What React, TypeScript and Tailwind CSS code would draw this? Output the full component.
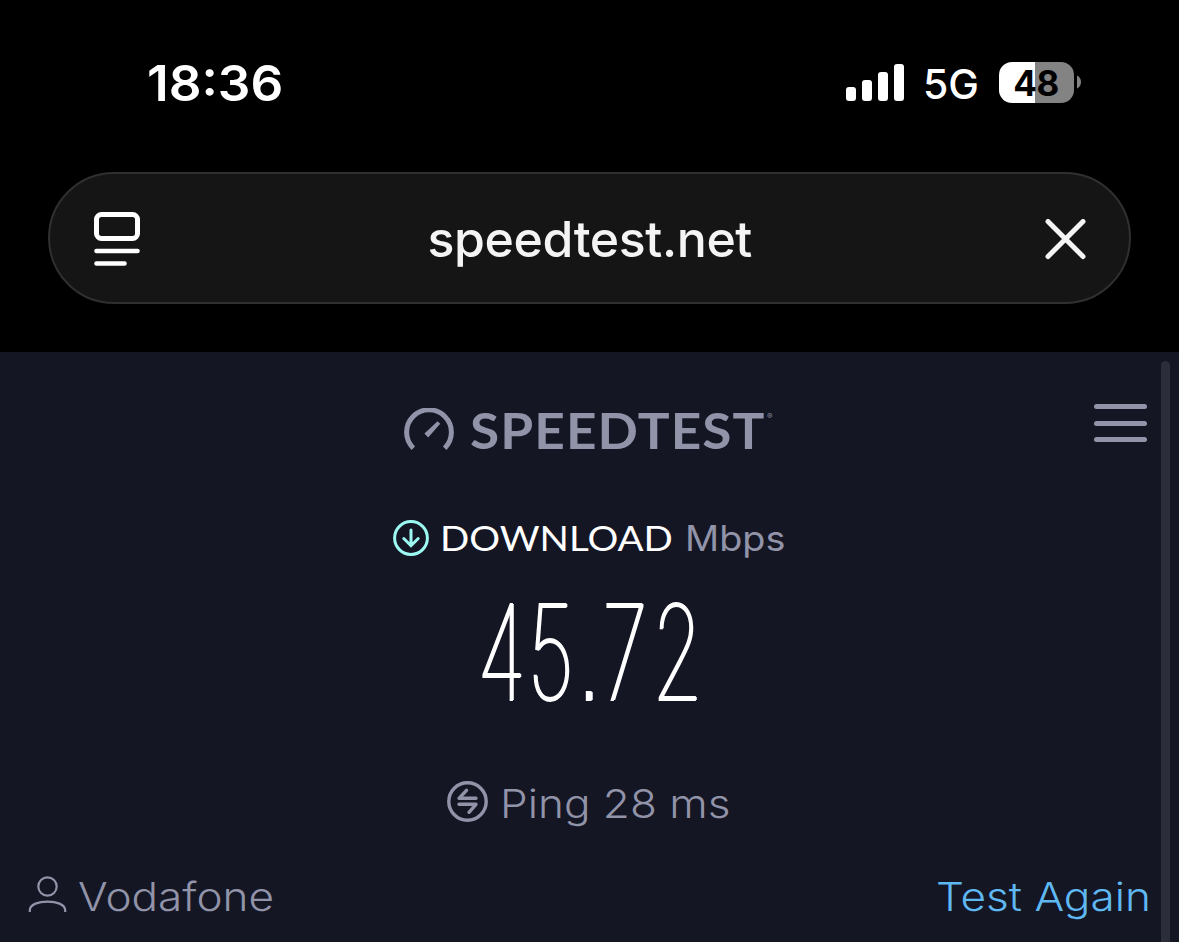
import type { ReactNode } from 'react'

interface LabelProps {
  className?: string
  children: ReactNode
}

// Single-line text whose box is sized by the caller
const Label = ({ className = '', children }: LabelProps) => (
  <span className={`block shrink-0 whitespace-nowrap origin-left ${className}`}>{children}</span>
)

const SignalBars = () => (
  <div className="flex items-end gap-[6px] h-[37px]">
    <div className="w-[10px] h-[14px] rounded-[3px] bg-white" />
    <div className="w-[10px] h-[21px] rounded-[3px] bg-white" />
    <div className="w-[10px] h-[29px] rounded-[3px] bg-white" />
    <div className="w-[10px] h-[37px] rounded-[3px] bg-white" />
  </div>
)

const Battery = () => (
  <div className="flex items-center gap-[3px]">
    <div className="flex items-center justify-center w-[75px] h-[41px] pr-px pt-[2px] rounded-[13px] bg-linear-to-r from-white from-48% to-[#838383] to-48%">
      <span className="text-[35px] leading-none font-bold tracking-[-0.5px] text-black">48</span>
    </div>
    <svg width="4" height="14" viewBox="0 0 4 14" fill="#838383">
      <path d="M0 0.5C2.4 1.6 4 4 4 7s-1.6 5.4-4 6.5z" />
    </svg>
  </div>
)

const StatusBar = () => (
  <div className="flex items-center justify-between h-[172px] pl-[147px] pr-[98px] pb-[8px] text-white">
    <Label className="text-[50px] leading-none font-semibold scale-x-[1.025] pt-px">18:36</Label>
    <div className="flex items-center">
      <SignalBars />
      <Label className="w-[56px] ml-[19px] mr-[20px] pt-[4px] text-[41px] leading-none font-[450]">5G</Label>
      <Battery />
    </div>
  </div>
)

const AddressBar = () => (
  <div className="flex items-center justify-between mx-12 h-[132px] pl-[44px] pr-[43px] pt-[2px] rounded-full border-[2px] border-[#303030] bg-[#151515]">
    <svg width="46" height="55" viewBox="0 0 46 55" fill="none" stroke="#fff" strokeWidth="5" strokeLinecap="round">
      <rect x="2.5" y="2.5" width="41" height="24" rx="5" />
      <path d="M2.5 39h41M2.5 51.5h28" strokeWidth="4.6" />
    </svg>
    <Label className="w-[325px] -ml-[5px] -mt-px text-[50px] leading-none font-medium tracking-[-0.4px] text-[#f4f4f4]">speedtest.net</Label>
    <svg width="41" height="41" viewBox="0 0 41 41" fill="none" stroke="#f4f4f4" strokeWidth="5" strokeLinecap="round">
      <path d="M3 2.5l35 35M38 2.5l-35 35" />
    </svg>
  </div>
)

const Logo = () => (
  <div className="flex items-start h-[46px] text-[#9193a8]">
    <svg width="50" height="44" viewBox="0 0 50 44" fill="none" className="shrink-0">
      <path d="M9.3 40.2A22.4 22.4 0 1 1 40.7 40.2" stroke="currentColor" strokeWidth="5" />
      <path d="M33.6 13.2l2.6 2.6L24.2 29.6l-3.8-4z" fill="currentColor" />
    </svg>
    <Label className="w-[297px] ml-[16px] -mt-[3px] font-[Lato] text-[49px] leading-[50px] font-bold tracking-[1px] scale-x-[1.085]">
      SPEEDTEST
    </Label>
    <span className="text-[8px] leading-none mt-[4px]">®</span>
  </div>
)

const MenuIcon = () => (
  <div className="flex flex-col gap-[11.7px] w-[53px]">
    <div className="h-[5px] rounded-full bg-[#9193a8]" />
    <div className="h-[5px] rounded-full bg-[#9193a8]" />
    <div className="h-[5px] rounded-full bg-[#9193a8]" />
  </div>
)

const App = () => {
  return (
    <div className="w-[1179px] h-[942px] overflow-hidden bg-black font-[Inter]">
      <StatusBar />
      <AddressBar />

      <main className="flex mt-12 h-[590px] bg-[#141624] text-[#9193a8]">
        <div className="flex flex-col w-[1161px]">
          {/* Header */}
          <header className="flex justify-between pl-[404px] pr-[14px] pt-[52px] h-[167px]">
            <div className="pt-[4px]">
              <Logo />
            </div>
            <MenuIcon />
          </header>

          {/* Download result */}
          <div className="flex items-center pl-[393px] h-[38px]">
            <svg width="36" height="36" viewBox="0 0 36 36" fill="none" stroke="#9cfaf2" strokeWidth="3">
              <circle cx="18" cy="18" r="16.4" />
              <path d="M18 10v15M10.8 18.5l7.2 7.2 7.2-7.2" strokeLinecap="round" />
            </svg>
            <Label className="w-[233px] ml-[11px] -mt-[2px] font-[Lato] text-[35px] leading-none text-white scale-x-[1.1]">DOWNLOAD</Label>
            <Label className="ml-[12px] text-[35px] leading-none scale-x-[1.08]">Mbps</Label>
          </div>
          <div className="pl-[477px] pt-[23px] h-[209px]">
            <Label className="w-[340px] scale-x-[0.62] text-[132px] leading-[145px] font-thin tracking-[3px] text-white [-webkit-text-stroke:2px_white] [text-shadow:2.5px_0_0_white]">
              45<span className="ml-[11px] mr-[8px] font-['Liberation_Sans'] text-[75px]">.</span><span className="tracking-[8px]">72</span>
            </Label>
          </div>

          {/* Ping */}
          <div className="flex items-center pl-[447px] h-[70px]">
            <svg width="41" height="41" viewBox="0 0 41 41" fill="none" stroke="currentColor" strokeWidth="3.4">
              <circle cx="20.5" cy="20.5" r="18.7" />
              <path d="M29 17.3H12l7.5-8M12 23.3h17l-7 8" strokeLinecap="round" strokeLinejoin="round" />
            </svg>
            <Label className="ml-[12px] pt-[4px] text-[39px] leading-none font-[350] scale-x-[1.13]">Ping 28 ms</Label>
          </div>

          {/* Provider and retry */}
          <div className="flex items-center justify-between pl-[28px] pr-[12px] mt-[24px] h-[72px]">
            <div className="flex items-center">
              <svg width="39" height="37" viewBox="0 0 39 37" fill="none" stroke="currentColor" strokeWidth="2.2" className="-mt-[4px]">
                <circle cx="19.5" cy="10.5" r="9.2" />
                <path d="M1.8 36v-1.5C1.8 28 11 25.6 19.5 25.6S37.2 28 37.2 34.5V36" />
              </svg>
              <Label className="ml-[11px] text-[39px] leading-none font-[350] scale-x-[1.13]">Vodafone</Label>
            </div>
            <Label className="w-[213px] text-[39px] leading-none font-[350] scale-x-[1.13] text-[#5fb8f2]">Test Again</Label>
          </div>
        </div>
        <div className="w-[9px] h-full mt-[9px] rounded-t-full bg-[#2c2d3b]" />
      </main>
    </div>
  )
}

export default App
